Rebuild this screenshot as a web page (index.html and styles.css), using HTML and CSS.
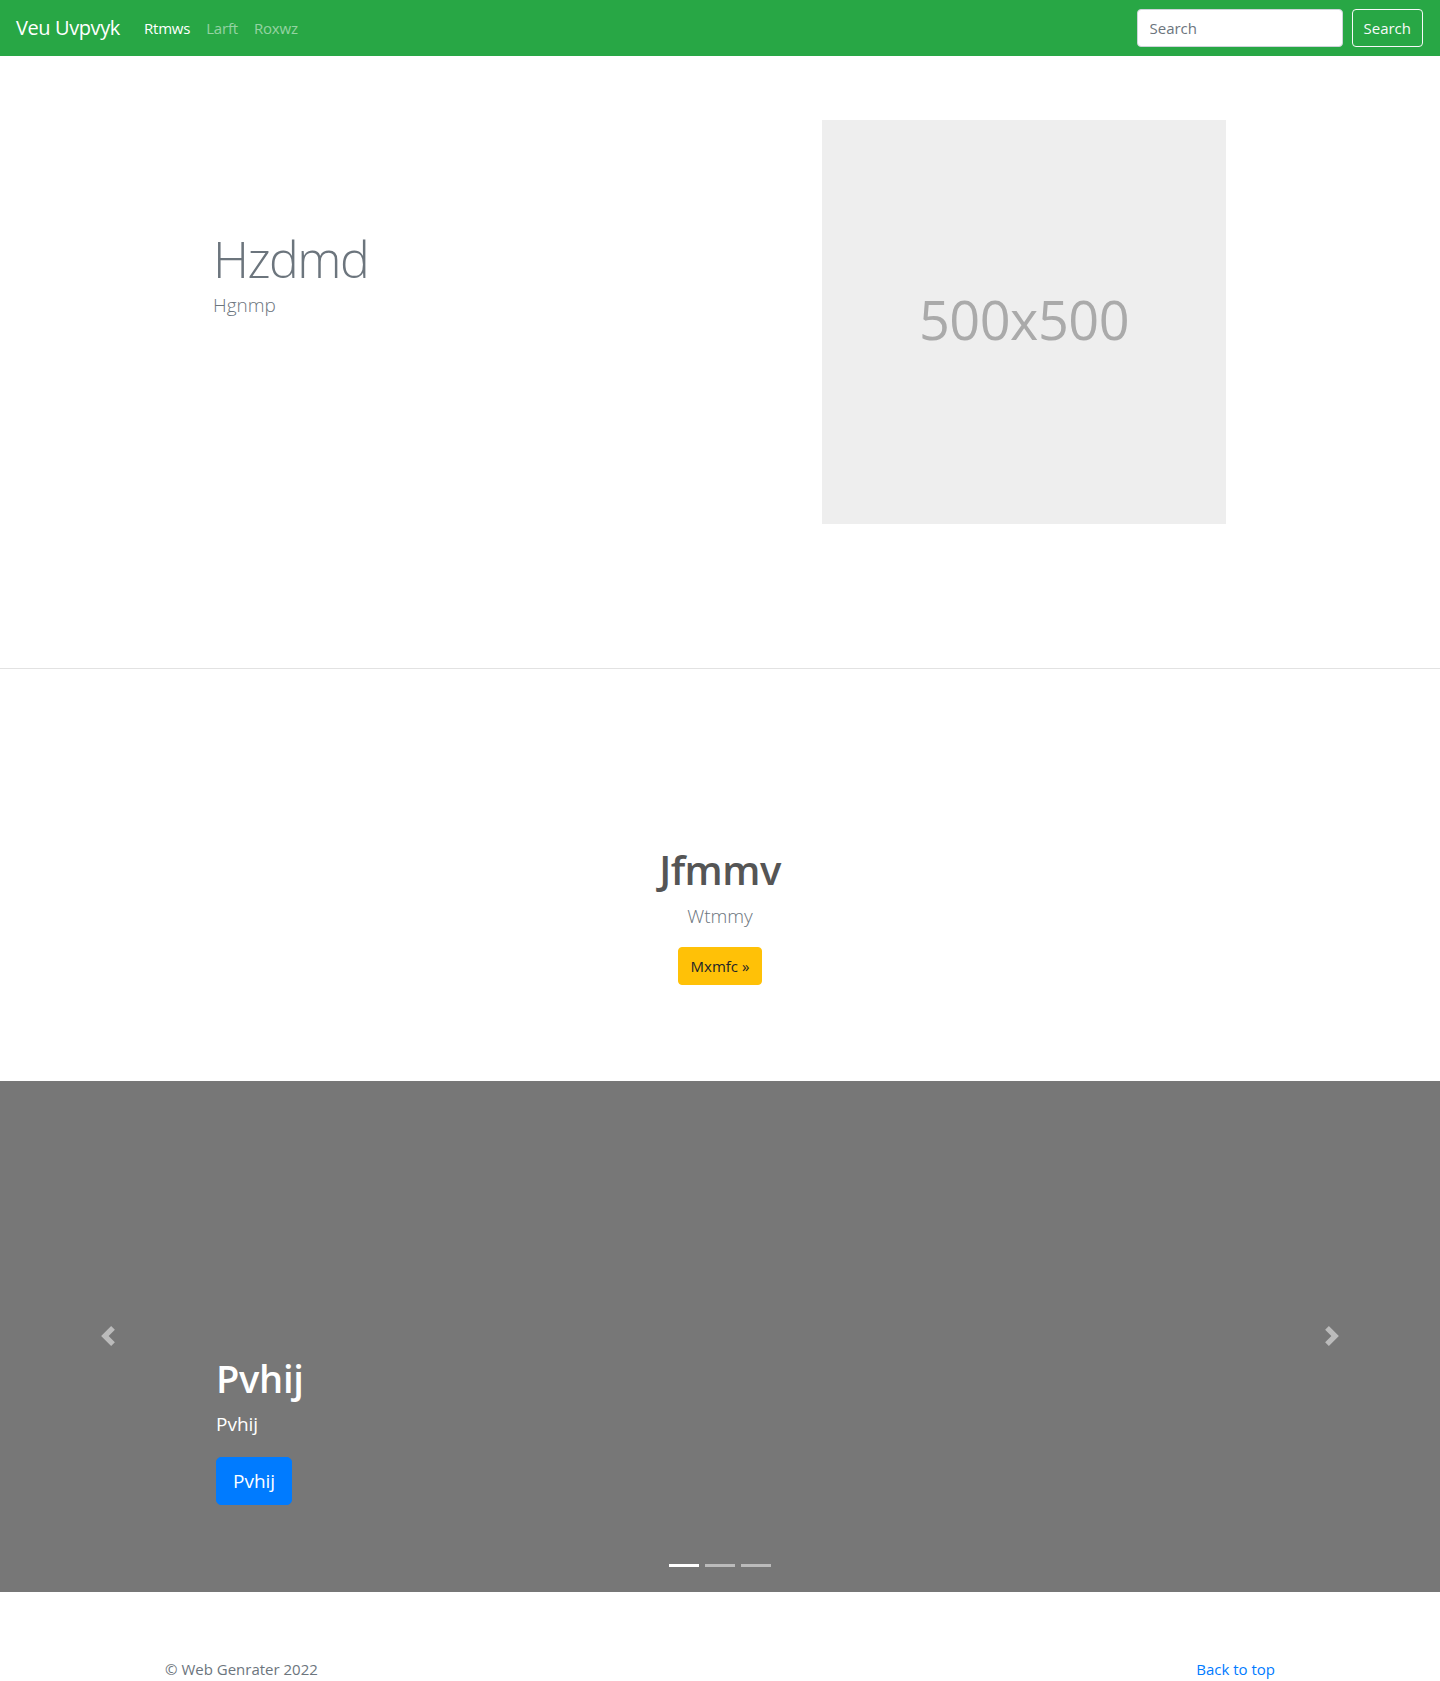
FILE: index.html
```html
<!DOCTYPE html>
<html lang="en">
<head>
<meta charset="utf-8">
<title>Veu Uvpvyk</title>
<link rel="stylesheet" href="styles.css">
</head>
<body>
<header class="navbar">
  <a class="brand" href="#">Veu Uvpvyk</a>
  <nav class="nav">
    <a class="nav-link active" href="#">Rtmws</a>
    <a class="nav-link" href="#">Larft</a>
    <a class="nav-link" href="#">Roxwz</a>
  </nav>
  <form class="search">
    <input class="search-input" type="text" placeholder="Search">
    <button class="btn-outline" type="button">Search</button>
  </form>
</header>

<section class="hero-wrap">
  <div class="hero">
    <div class="hero-text">
      <h1 class="display">Hzdmd</h1>
      <p class="lead muted">Hgnmp</p>
    </div>
    <div class="placeholder"><span>500x500</span></div>
  </div>
</section>

<section class="intro">
  <h2 class="intro-title">Jfmmv</h2>
  <p class="lead muted intro-lead">Wtmmy</p>
  <a class="btn btn-warning" href="#">Mxmfc &raquo;</a>
</section>

<section class="carousel">
  <a class="control control-prev" href="#">
    <svg width="20" height="20" viewBox="0 0 8 8"><path fill="#fff" d="M5.25 0l-4 4 4 4 1.5-1.5L4.25 4l2.5-2.5L5.25 0z"/></svg>
  </a>
  <div class="caption">
    <h1 class="caption-title">Pvhij</h1>
    <p class="caption-text">Pvhij</p>
    <a class="btn btn-lg btn-primary" href="#">Pvhij</a>
  </div>
  <a class="control control-next" href="#">
    <svg width="20" height="20" viewBox="0 0 8 8"><path fill="#fff" d="M2.75 0l-1.5 1.5L3.75 4l-2.5 2.5L2.75 8l4-4-4-4z"/></svg>
  </a>
  <ol class="indicators">
    <li class="active"></li>
    <li></li>
    <li></li>
  </ol>
</section>

<footer class="footer">
  <p>&copy; Web Genrater 2022</p>
  <a href="#">Back to top</a>
</footer>
</body>
</html>
```

FILE: styles.css
```css
* { box-sizing: border-box; }

html, body {
  margin: 0;
  padding: 0;
}

body {
  font-family: "Open Sans", "Noto Sans", "Liberation Sans", sans-serif;
  font-size: 16px;
  line-height: 1.5;
  color: #212529;
  background: #fff;
}

a { text-decoration: none; }

p { margin: 0; }

/* Navbar */
.navbar {
  height: 56px;
  background: #28a745;
  display: flex;
  align-items: center;
  padding: 0 17px 0 16px;
}

.brand {
  color: #fff;
  font-size: 20px;
  line-height: 30px;
  margin-right: 16px;
  letter-spacing: -0.4px;
}

.nav {
  display: flex;
  flex: 1;
}

.nav-link {
  color: rgba(255, 255, 255, 0.5);
  padding: 8px 8px;
  font-size: 15px;
  letter-spacing: -0.2px;
}

.nav-link.active { color: #fff; }

.search {
  display: flex;
  align-items: center;
  gap: 9px;
  margin: 0;
}

.search-input {
  width: 206px;
  height: 38px;
  padding: 6px 12px;
  font-family: inherit;
  font-size: 15px;
  color: #495057;
  background: #fff;
  border: 1px solid #ced4da;
  border-radius: 4px;
  outline: none;
}

.search-input::placeholder { color: #6c757d; }

.btn-outline {
  height: 38px;
  padding: 6px 11px;
  font-family: inherit;
  font-size: 15px;
  color: #f8f9fa;
  background: transparent;
  border: 1px solid #f8f9fa;
  border-radius: 4px;
}

/* Hero */
.hero-wrap {
  border-bottom: 1px solid #e2e2e2;
}

.hero {
  width: 1140px;
  margin: 0 auto;
  display: flex;
  padding: 64px 15px 144px;
}

.hero-text {
  flex: 1;
  padding-left: 48px;
  padding-top: 109px;
}

.display {
  margin: 0;
  font-size: 50px;
  font-weight: 300;
  line-height: 1.2;
  color: #6c757d;
  letter-spacing: -1.5px;
}

.lead {
  font-size: 19px;
  font-weight: 300;
  line-height: 1.5;
}

.muted { color: #6c757d; }

.hero-text .lead { margin-top: 2px; }

.placeholder {
  width: 404px;
  height: 404px;
  margin-right: 49px;
  padding-bottom: 6px;
  background: #eee;
  display: flex;
  align-items: center;
  justify-content: center;
}

.placeholder span {
  color: #aaa;
  font-size: 54px;
  letter-spacing: -0.5px;
}

/* Intro */
.intro {
  display: flex;
  flex-direction: column;
  align-items: center;
  padding: 177px 0 96px;
}

.intro-title {
  margin: 0 0 8px;
  font-size: 40px;
  font-weight: 600;
  line-height: 1.2;
  color: #555;
  letter-spacing: -0.5px;
}

.intro-lead { margin-bottom: 16px; }

.btn {
  display: inline-block;
  border: 1px solid transparent;
  border-radius: 4px;
  padding: 6px 12px;
  font-size: 15px;
  line-height: 24px;
}

.btn-warning {
  background: #ffc107;
  border-color: #ffc107;
  color: #212529;
}

.btn-lg {
  padding: 8px 16px;
  font-size: 19px;
  line-height: 30px;
  border-radius: 5px;
}

.btn-primary {
  background: #007bff;
  border-color: #007bff;
  color: #fff;
}

/* Carousel */
.carousel {
  position: relative;
  height: 511px;
  background: #777;
  display: flex;
  flex-direction: column;
  justify-content: flex-end;
  padding: 0 216px 87px;
}

.caption {
  color: #fff;
  display: flex;
  flex-direction: column;
  align-items: flex-start;
}

.caption-title {
  margin: 0 0 7px;
  font-size: 38px;
  font-weight: 600;
  line-height: 1.2;
  letter-spacing: -0.3px;
}

.caption-text {
  font-size: 19px;
  line-height: 30px;
  margin-bottom: 18px;
}

.control {
  position: absolute;
  top: 0;
  bottom: 0;
  width: 216px;
  display: flex;
  align-items: center;
  justify-content: center;
  opacity: 0.5;
}

.control-prev { left: 0; }
.control-next { right: 0; }

.indicators {
  position: absolute;
  left: 0;
  right: 0;
  bottom: 25px;
  margin: 0;
  padding: 0;
  list-style: none;
  display: flex;
  justify-content: center;
  gap: 6px;
}

.indicators li {
  width: 30px;
  height: 3px;
  background: #fff;
  opacity: 0.5;
}

.indicators li.active { opacity: 1; }

/* Footer */
.footer {
  width: 1140px;
  margin: 0 auto;
  padding: 66px 15px 48px;
  display: flex;
  justify-content: space-between;
  color: #6c757d;
  font-size: 15px;
}

.footer a { color: #007bff; }
```
